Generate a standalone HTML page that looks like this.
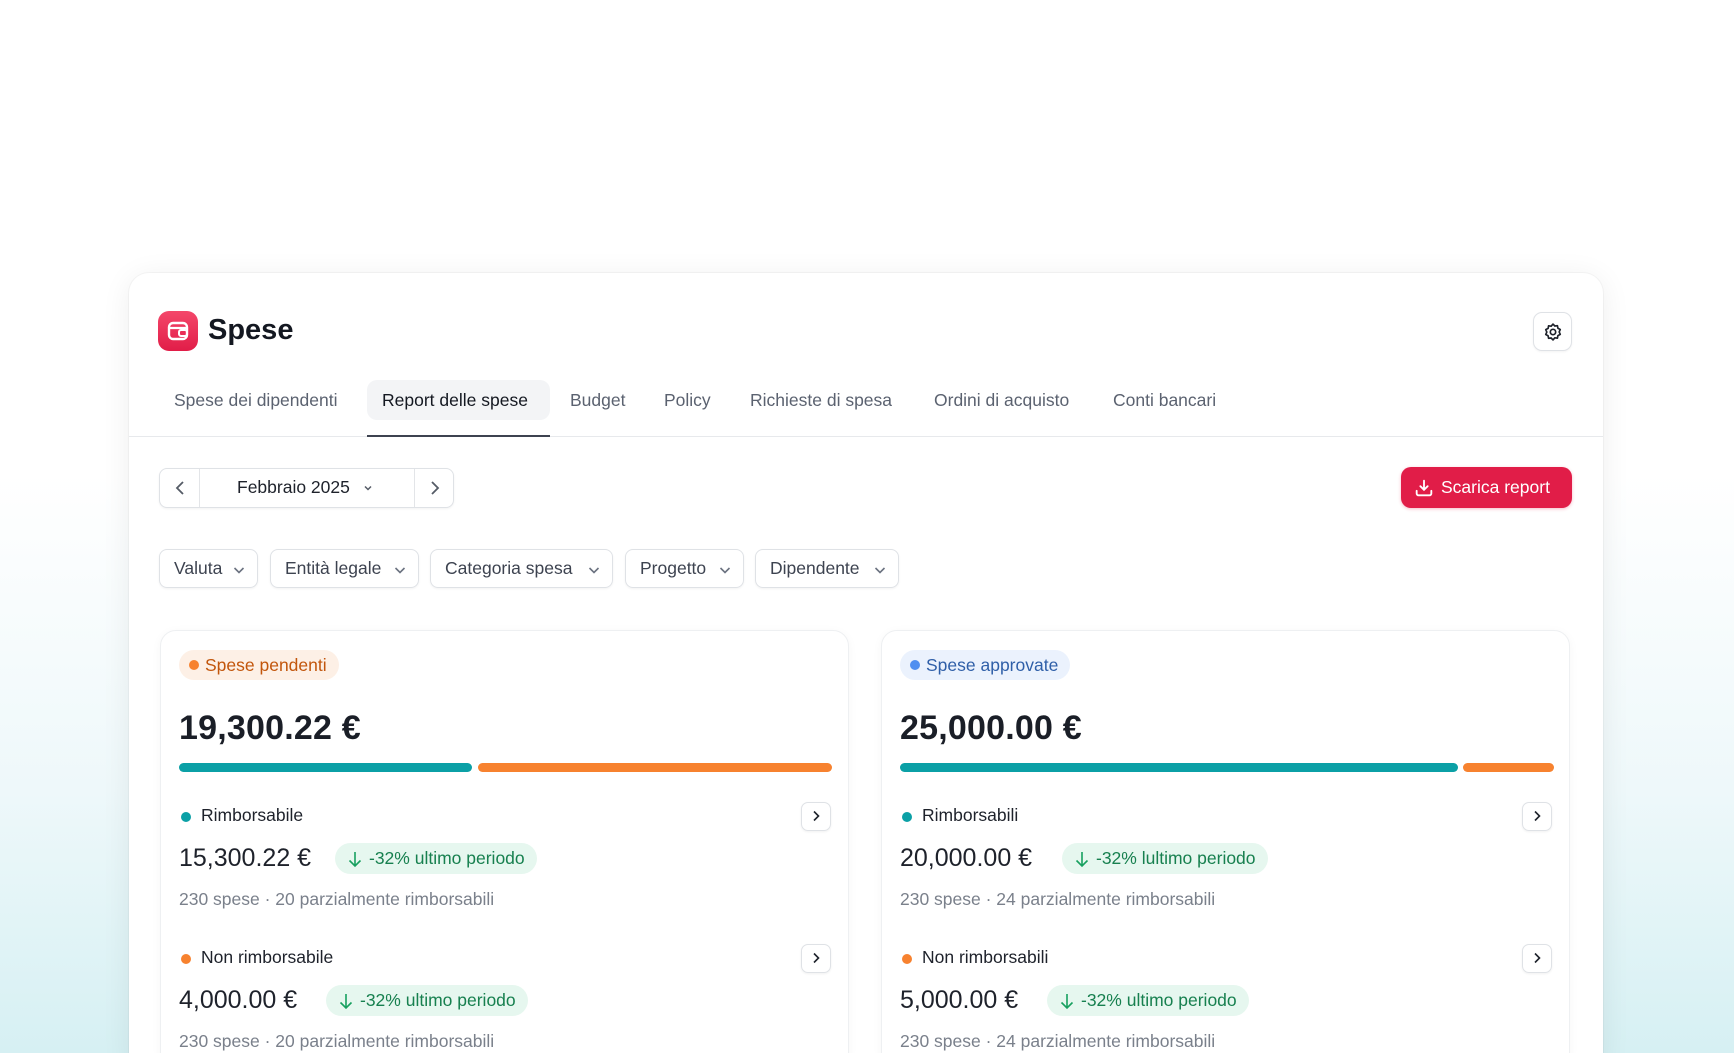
<!DOCTYPE html>
<html style="width:1734px;height:1053px;overflow:hidden"><head><meta charset="utf-8"><style>
*{margin:0;padding:0;box-sizing:border-box}
html{background:linear-gradient(180deg,#fff 0%,#fff 45%,#eef8fa 75%,#d6f0f3 100%);}
body{width:1734px;height:1053px;overflow:hidden;font-family:"Liberation Sans",sans-serif;position:relative;
background:linear-gradient(180deg,#fff 0%,#fff 45%,#eef8fa 75%,#d6f0f3 100%);}
.a{position:absolute;white-space:nowrap}
.card{position:absolute;left:129px;top:273px;width:1474px;height:800px;background:#fff;border-radius:20px;box-shadow:0 4px 30px rgba(0,0,0,.07),0 0 0 1px rgba(0,0,0,.03)}
.tab{position:absolute;top:380px;height:40px;line-height:40px;font-size:17.5px;color:#5b6270}
.box{position:absolute;border:1.5px solid #dfe2e6;border-radius:8px;background:#fff;box-shadow:0 1px 2px rgba(0,0,0,.05)}
.flt{position:absolute;top:549px;height:39px;line-height:36px;font-size:17.5px;color:#3d4350;padding-left:14px;border:1.5px solid #dfe2e6;border-radius:8px;box-shadow:0 1px 2px rgba(0,0,0,.05)}
.flt svg{position:absolute;right:10px;top:12px}
.sc{position:absolute;top:630px;width:689px;height:440px;background:#fff;border-radius:16px;border:1px solid #eef0f2;box-shadow:0 2px 10px rgba(0,0,0,.04)}
.badge{position:absolute;top:19px;left:18px;height:30px;line-height:30px;border-radius:15px;font-size:17.5px;padding:0 12px 0 26px}
.badge:before{content:"";position:absolute;left:10px;top:10px;width:10px;height:10px;border-radius:50%;background:var(--d)}
.big{position:absolute;left:18px;top:78px;font-size:34px;font-weight:bold;color:#1a1e27;letter-spacing:.2px}
.bar{position:absolute;top:132px;height:9px;border-radius:5px}
.lbl{position:absolute;left:40px;font-size:17.5px;color:#1e222b}
.dot{position:absolute;left:20px;width:10px;height:10px;border-radius:50%}
.chev{position:absolute;right:17px;width:30px;height:29px;border:1.5px solid #dfe2e6;border-radius:7px;box-shadow:0 1px 2px rgba(0,0,0,.06)}
.chev svg{position:absolute;left:8px;top:7px}
.amt{position:absolute;left:18px;font-size:25px;color:#1e222b}
.pill{position:absolute;height:31px;line-height:31px;border-radius:16px;background:#e6f7ef;color:#17804f;font-size:17.5px;padding:0 12px 0 34px}
.pill svg{position:absolute;left:12px;top:7px}
.sub{position:absolute;left:18px;font-size:17.5px;color:#7a808b}
</style></head><body>
<div class="card"></div>
<div class="a" style="left:158px;top:311px;width:40px;height:40px;border-radius:11px;background:linear-gradient(180deg,#f4476a,#e11d48)">
<svg width="40" height="40" viewBox="0 0 40 40"><rect x="11" y="12" width="18" height="16" rx="4" fill="none" stroke="#fff" stroke-width="2.4"/><path d="M11 17h18" stroke="#fff" stroke-width="2.2"/><rect x="21" y="19" width="8" height="6" rx="2" fill="none" stroke="#fff" stroke-width="2"/></svg></div>
<div class="a" style="left:208px;top:312px;font-size:29px;line-height:36px;color:#141821;font-weight:bold">Spese</div>
<div class="box" style="left:1533px;top:312px;width:39px;height:39px;border-radius:9px">
<svg style="position:absolute;left:9px;top:9px" width="20" height="20" viewBox="0 0 24 24" fill="none" stroke="#1e222b" stroke-width="2" stroke-linejoin="round"><path d="M12 2.5l2.2 2.3 3.1-.4.6 3.1 2.8 1.5-1.3 2.9 1.3 2.9-2.8 1.5-.6 3.1-3.1-.4L12 21.5l-2.2-2.3-3.1.4-.6-3.1-2.8-1.5 1.3-2.9-1.3-2.9 2.8-1.5.6-3.1 3.1.4z"/><circle cx="12" cy="12" r="3.2"/></svg></div>

<div class="a" style="left:367px;top:380px;width:183px;height:40px;background:#f3f4f6;border-radius:10px"></div>
<div class="tab" style="left:174px">Spese dei dipendenti</div>
<div class="tab" style="left:382px;color:#141821">Report delle spese</div>
<div class="tab" style="left:570px">Budget</div>
<div class="tab" style="left:664px">Policy</div>
<div class="tab" style="left:750px">Richieste di spesa</div>
<div class="tab" style="left:934px">Ordini di acquisto</div>
<div class="tab" style="left:1113px">Conti bancari</div>
<div class="a" style="left:129px;top:436px;width:1474px;height:1px;background:#e7e9ec"></div>
<div class="a" style="left:367px;top:435px;width:183px;height:2px;background:#3d4350"></div>

<div class="box" style="left:159px;top:468px;width:295px;height:40px"></div>
<div class="a" style="left:199px;top:469px;width:1px;height:38px;background:#e3e5e8"></div>
<div class="a" style="left:414px;top:469px;width:1px;height:38px;background:#e3e5e8"></div>
<svg class="a" style="left:170px;top:478px" width="20" height="20" viewBox="0 0 20 20" fill="none" stroke="#555b66" stroke-width="1.8"><path d="M13 4l-6 6 6 6"/></svg>
<svg class="a" style="left:425px;top:478px" width="20" height="20" viewBox="0 0 20 20" fill="none" stroke="#555b66" stroke-width="1.8"><path d="M7 4l6 6-6 6"/></svg>
<div class="a" style="left:237px;top:476px;font-size:17.5px;line-height:22px;color:#1e222b">Febbraio 2025</div>
<svg class="a" style="left:362px;top:482px" width="12" height="12" viewBox="0 0 12 12" fill="none" stroke="#555b66" stroke-width="1.5"><path d="M3 4.5l3 3 3-3"/></svg>

<div class="a" style="left:1401px;top:467px;width:171px;height:41px;border-radius:10px;background:#e11d48;box-shadow:0 1px 3px rgba(225,29,72,.3)"></div>
<svg class="a" style="left:1413px;top:477px" width="22" height="22" viewBox="0 0 24 24" fill="none" stroke="#fff" stroke-width="2" stroke-linecap="round"><path d="M12 4v10M8 10l4 4 4-4M4 15v3a2 2 0 0 0 2 2h12a2 2 0 0 0 2-2v-3"/></svg>
<div class="a" style="left:1441px;top:476px;font-size:17.5px;line-height:22px;color:#fff;font-weight:500">Scarica report</div>

<div class="flt" style="left:159px;width:99px">Valuta<svg width="16" height="16" viewBox="0 0 16 16" fill="none" stroke="#6b7280" stroke-width="1.6"><path d="M3.5 6l4.5 4.5L12.5 6"/></svg></div>
<div class="flt" style="left:270px;width:149px">Entità legale<svg width="16" height="16" viewBox="0 0 16 16" fill="none" stroke="#6b7280" stroke-width="1.6"><path d="M3.5 6l4.5 4.5L12.5 6"/></svg></div>
<div class="flt" style="left:430px;width:183px">Categoria spesa<svg width="16" height="16" viewBox="0 0 16 16" fill="none" stroke="#6b7280" stroke-width="1.6"><path d="M3.5 6l4.5 4.5L12.5 6"/></svg></div>
<div class="flt" style="left:625px;width:119px">Progetto<svg width="16" height="16" viewBox="0 0 16 16" fill="none" stroke="#6b7280" stroke-width="1.6"><path d="M3.5 6l4.5 4.5L12.5 6"/></svg></div>
<div class="flt" style="left:755px;width:144px">Dipendente<svg width="16" height="16" viewBox="0 0 16 16" fill="none" stroke="#6b7280" stroke-width="1.6"><path d="M3.5 6l4.5 4.5L12.5 6"/></svg></div>

<div class="sc" style="left:160px">
<div class="badge" style="background:#fdf0e6;color:#c2560c;--d:#f7822f"><span>Spese pendenti</span></div>
<div class="big">19,300.22 €</div>
<div class="bar" style="left:18px;width:293px;background:#0ba0a6"></div>
<div class="bar" style="left:317px;width:354px;background:#f7822f"></div>
<div class="dot" style="top:181px;background:#0ba0a6"></div>
<div class="lbl" style="top:174px">Rimborsabile</div>
<div class="chev" style="top:171px"><svg width="12" height="12" viewBox="0 0 12 12" fill="none" stroke="#1e222b" stroke-width="1.6"><path d="M4 1.5L8.5 6 4 10.5"/></svg></div>
<div class="amt" style="top:213px">15,300.22 €</div>
<div class="pill" style="left:174px;top:212px"><svg width="16" height="18" viewBox="0 0 16 18" fill="none" stroke="#17a05f" stroke-width="1.6"><path d="M8 2v14M2.5 10.5L8 16l5.5-5.5"/></svg>-32% ultimo periodo</div>
<div class="sub" style="top:258px">230 spese · 20 parzialmente rimborsabili</div>
<div class="dot" style="top:323px;background:#f7822f"></div>
<div class="lbl" style="top:316px">Non rimborsabile</div>
<div class="chev" style="top:313px"><svg width="12" height="12" viewBox="0 0 12 12" fill="none" stroke="#1e222b" stroke-width="1.6"><path d="M4 1.5L8.5 6 4 10.5"/></svg></div>
<div class="amt" style="top:355px">4,000.00 €</div>
<div class="pill" style="left:165px;top:354px"><svg width="16" height="18" viewBox="0 0 16 18" fill="none" stroke="#17a05f" stroke-width="1.6"><path d="M8 2v14M2.5 10.5L8 16l5.5-5.5"/></svg>-32% ultimo periodo</div>
<div class="sub" style="top:400px">230 spese · 20 parzialmente rimborsabili</div>
</div>

<div class="sc" style="left:881px">
<div class="badge" style="background:#ebf2fd;color:#2f5fa8;--d:#4f8ff0"><span>Spese approvate</span></div>
<div class="big">25,000.00 €</div>
<div class="bar" style="left:18px;width:558px;background:#0ba0a6"></div>
<div class="bar" style="left:581px;width:91px;background:#f7822f"></div>
<div class="dot" style="top:181px;background:#0ba0a6"></div>
<div class="lbl" style="top:174px">Rimborsabili</div>
<div class="chev" style="top:171px"><svg width="12" height="12" viewBox="0 0 12 12" fill="none" stroke="#1e222b" stroke-width="1.6"><path d="M4 1.5L8.5 6 4 10.5"/></svg></div>
<div class="amt" style="top:213px">20,000.00 €</div>
<div class="pill" style="left:180px;top:212px"><svg width="16" height="18" viewBox="0 0 16 18" fill="none" stroke="#17a05f" stroke-width="1.6"><path d="M8 2v14M2.5 10.5L8 16l5.5-5.5"/></svg>-32% lultimo periodo</div>
<div class="sub" style="top:258px">230 spese · 24 parzialmente rimborsabili</div>
<div class="dot" style="top:323px;background:#f7822f"></div>
<div class="lbl" style="top:316px">Non rimborsabili</div>
<div class="chev" style="top:313px"><svg width="12" height="12" viewBox="0 0 12 12" fill="none" stroke="#1e222b" stroke-width="1.6"><path d="M4 1.5L8.5 6 4 10.5"/></svg></div>
<div class="amt" style="top:355px">5,000.00 €</div>
<div class="pill" style="left:165px;top:354px"><svg width="16" height="18" viewBox="0 0 16 18" fill="none" stroke="#17a05f" stroke-width="1.6"><path d="M8 2v14M2.5 10.5L8 16l5.5-5.5"/></svg>-32% ultimo periodo</div>
<div class="sub" style="top:400px">230 spese · 24 parzialmente rimborsabili</div>
</div>
</body></html>
